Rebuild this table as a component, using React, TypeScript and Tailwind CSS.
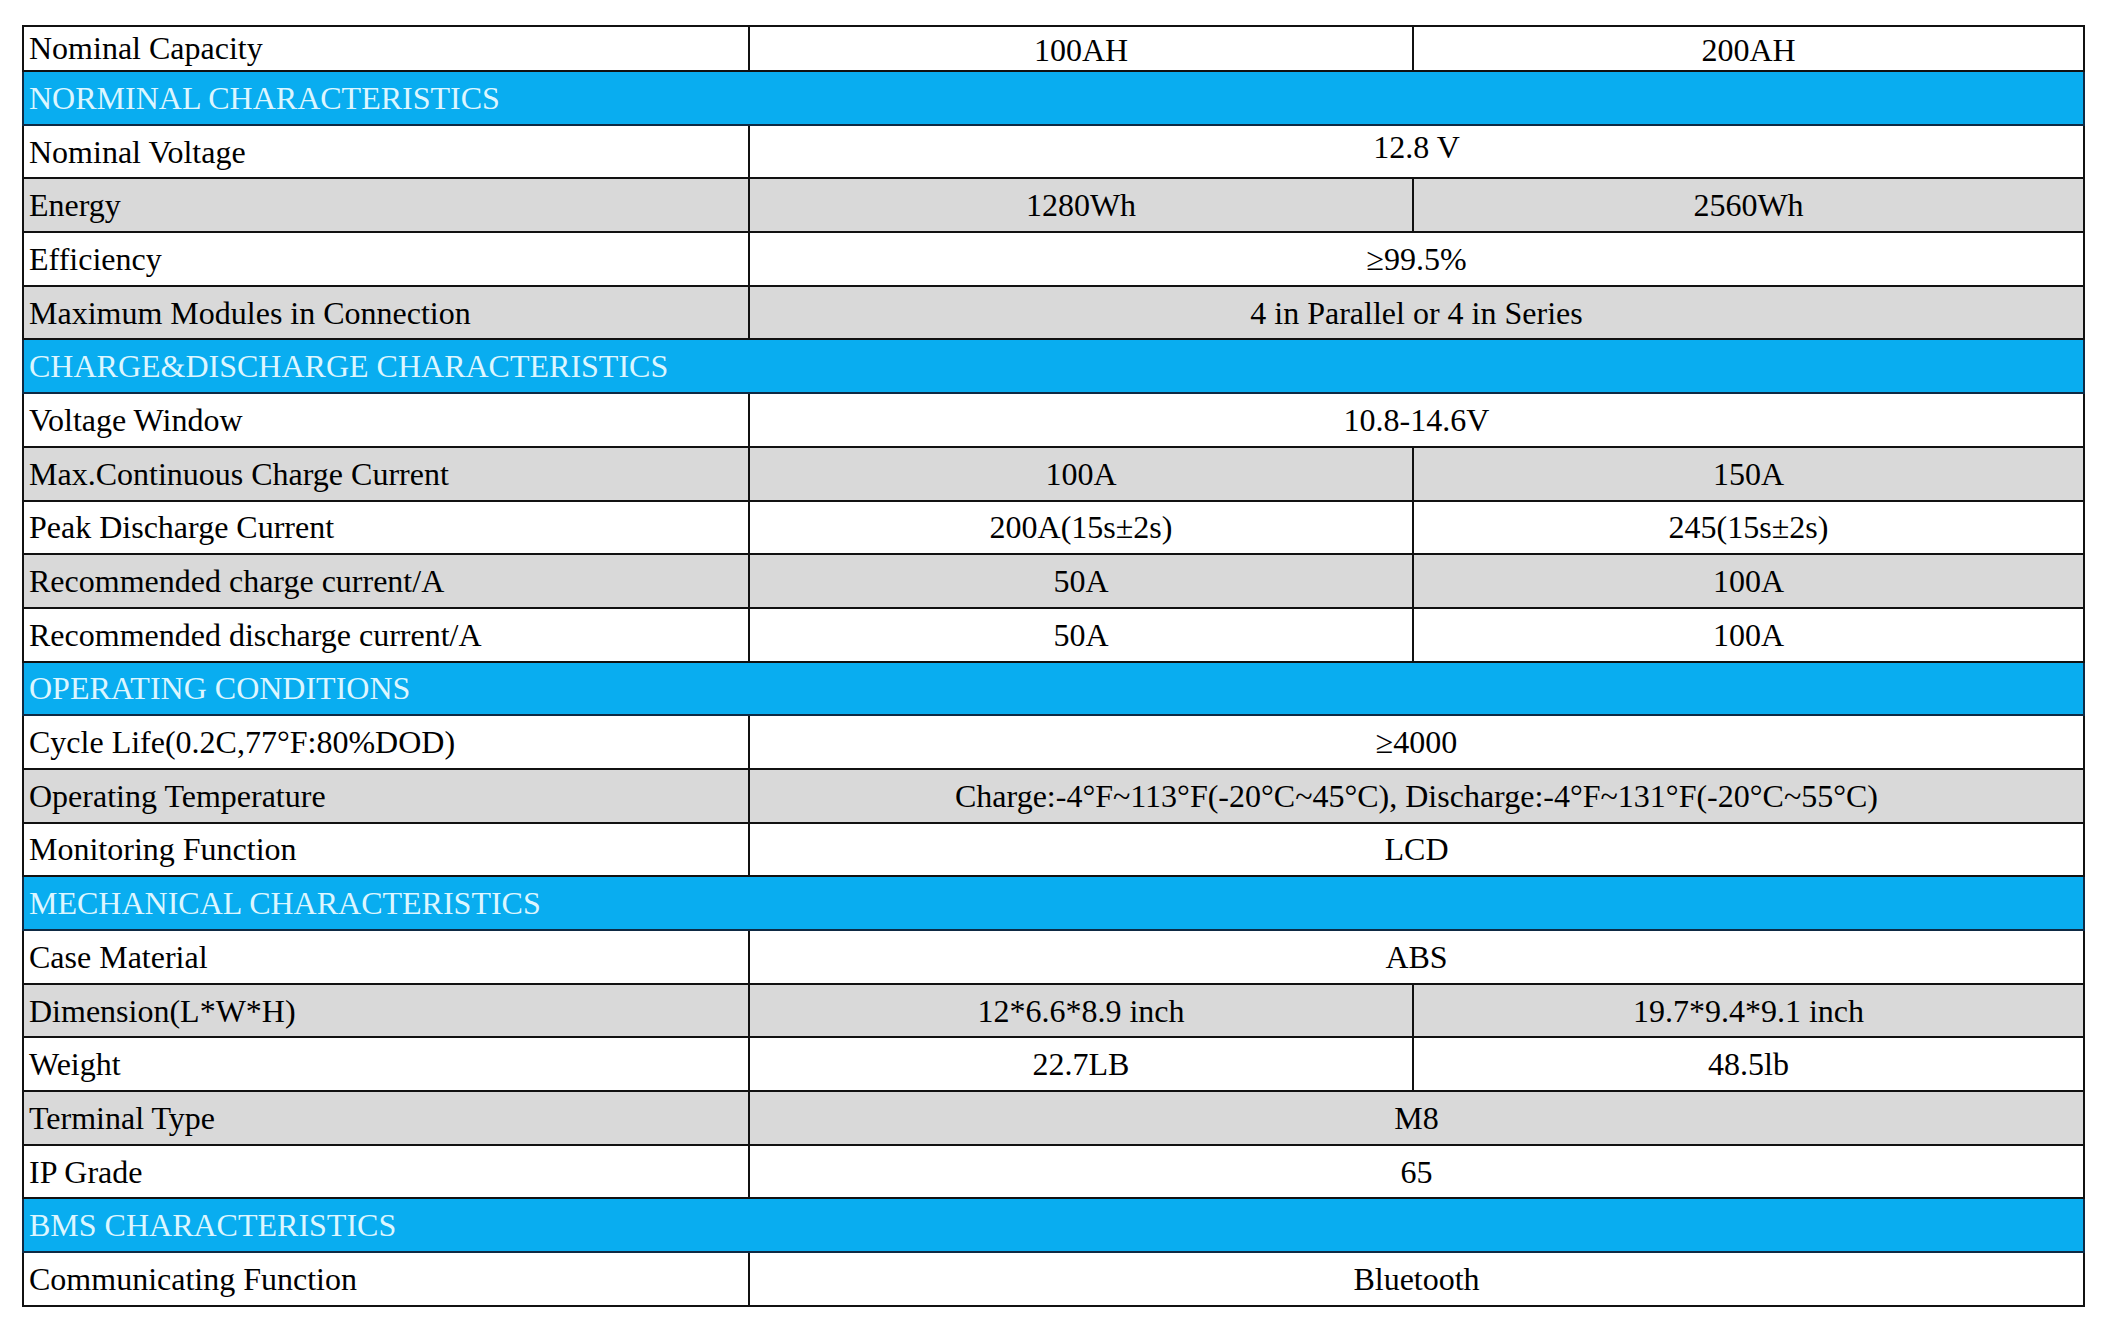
import React from 'react'

type Row =
  | { kind: 'section'; title: string }
  | { kind: 'row'; label: string; values: string[]; shade?: boolean; lift?: boolean }

const rows: Row[] = [
  { kind: 'section', title: 'NORMINAL CHARACTERISTICS' },
  { kind: 'row', label: 'Nominal Voltage', values: ['12.8 V'], lift: true },
  { kind: 'row', label: 'Energy', values: ['1280Wh', '2560Wh'], shade: true },
  { kind: 'row', label: 'Efficiency', values: ['≥99.5%'] },
  { kind: 'row', label: 'Maximum Modules in Connection', values: ['4 in Parallel or 4 in Series'], shade: true },
  { kind: 'section', title: 'CHARGE&DISCHARGE CHARACTERISTICS' },
  { kind: 'row', label: 'Voltage Window', values: ['10.8-14.6V'] },
  { kind: 'row', label: 'Max.Continuous Charge Current', values: ['100A', '150A'], shade: true },
  { kind: 'row', label: 'Peak Discharge Current', values: ['200A(15s±2s)', '245(15s±2s)'] },
  { kind: 'row', label: 'Recommended charge current/A', values: ['50A', '100A'], shade: true },
  { kind: 'row', label: 'Recommended discharge current/A', values: ['50A', '100A'] },
  { kind: 'section', title: 'OPERATING CONDITIONS' },
  { kind: 'row', label: 'Cycle Life(0.2C,77°F:80%DOD)', values: ['≥4000'] },
  {
    kind: 'row',
    label: 'Operating Temperature',
    values: ['Charge:-4°F~113°F(-20°C~45°C), Discharge:-4°F~131°F(-20°C~55°C)'],
    shade: true,
  },
  { kind: 'row', label: 'Monitoring Function', values: ['LCD'] },
  { kind: 'section', title: 'MECHANICAL CHARACTERISTICS' },
  { kind: 'row', label: 'Case Material', values: ['ABS'] },
  { kind: 'row', label: 'Dimension(L*W*H)', values: ['12*6.6*8.9 inch', '19.7*9.4*9.1 inch'], shade: true },
  { kind: 'row', label: 'Weight', values: ['22.7LB', '48.5lb'] },
  { kind: 'row', label: 'Terminal Type', values: ['M8'], shade: true },
  { kind: 'row', label: 'IP Grade', values: ['65'] },
  { kind: 'section', title: 'BMS CHARACTERISTICS' },
  { kind: 'row', label: 'Communicating Function', values: ['Bluetooth'] },
]

export default function App() {
  return (
    <div className="min-h-[1332px] w-[2104px] bg-white pl-[22px] pt-[25px] font-['Liberation_Serif','Times_New_Roman',serif] text-[32px] leading-none text-black">
      <table className="w-[2061px] table-fixed border-collapse border-2 border-[#111]">
        <colgroup>
          <col className="w-[726px]" />
          <col className="w-[664px]" />
          <col className="w-[671px]" />
        </colgroup>
        <tbody>
          <tr className="h-[45px]">
            <td className="border-2 border-[#111] px-[5px] pb-[1px] align-middle">Nominal Capacity</td>
            <td className="border-2 border-[#111] pt-[2px] text-center align-middle">100AH</td>
            <td className="border-2 border-[#111] pt-[2px] text-center align-middle">200AH</td>
          </tr>
          {rows.map((row, i) =>
            row.kind === 'section' ? (
              <tr key={i} className="h-[53.7px] bg-[#09adf0]">
                <td colSpan={3} className="border-2 border-[#0e2a44] px-[5px] align-middle text-[#dcf6ff]">
                  {row.title}
                </td>
              </tr>
            ) : (
              <tr key={i} className={row.shade ? 'h-[53.7px] bg-[#d9d9d9]' : 'h-[53.7px] bg-white'}>
                <td className="border-2 border-[#111] px-[5px] align-middle">{row.label}</td>
                {row.values.length === 1 ? (
                  <td
                    colSpan={2}
                    className={
                      row.lift
                        ? 'border-2 border-[#111] pb-[10px] text-center align-middle'
                        : 'border-2 border-[#111] text-center align-middle'
                    }
                  >
                    {row.values[0]}
                  </td>
                ) : (
                  row.values.map((v, j) => (
                    <td key={j} className="border-2 border-[#111] text-center align-middle">
                      {v}
                    </td>
                  ))
                )}
              </tr>
            ),
          )}
        </tbody>
      </table>
    </div>
  )
}
